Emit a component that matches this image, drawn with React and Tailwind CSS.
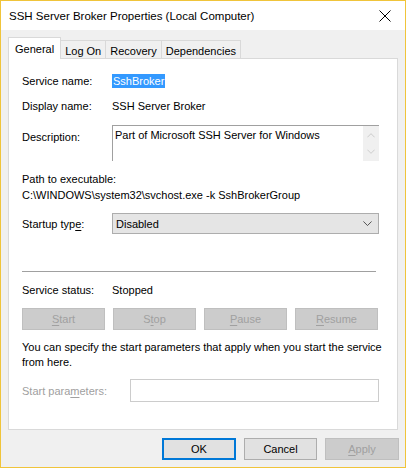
import React from "react";

const font = { fontFamily: '"Liberation Sans", Arial, sans-serif' };

function CloseIcon() {
  return (
    <svg width="12" height="12" viewBox="0 0 12 12" fill="none" stroke="#000" strokeWidth="1">
      <path d="M0.5 0.5 L11.5 11.5 M11.5 0.5 L0.5 11.5" />
    </svg>
  );
}

function Chevron({ up, color = "#000", w = 11, h = 6 }) {
  return (
    <svg width={w} height={h} viewBox="0 0 11 6" fill="none" stroke={color} strokeWidth="1">
      {up ? <path d="M0.5 5.5 L5.5 0.5 L10.5 5.5" /> : <path d="M0.5 0.5 L5.5 5.5 L10.5 0.5" />}
    </svg>
  );
}

function Tab({ label, active }) {
  if (active) {
    return (
      <div className="relative z-10 h-[22px] -mb-px px-[6px] pt-[3px] bg-white border border-b-0 border-[#d9d9d9] text-black">
        {label}
      </div>
    );
  }
  return (
    <div className="mt-[3px] h-[18px] -ml-px px-[4px] pt-[2px] bg-[#f0f0f0] border border-b-0 border-[#d9d9d9] text-black">
      {label}
    </div>
  );
}

function Ul({ children }) {
  return <span className="underline underline-offset-2">{children}</span>;
}

function DisabledBtn({ children }) {
  return (
    <div className="h-[22px] flex items-center justify-center bg-[#cccccc] border border-[#bfbfbf] text-[#a0a0a0]">
      {children}
    </div>
  );
}

export default function App() {
  return (
    <div
      className="w-[406px] h-[468px] border border-[#f0c43a] bg-[#f0f0f0] flex flex-col text-[11px] leading-[16px] text-black"
      style={font}
    >
      {/* title bar */}
      <div className="h-[29px] bg-white flex items-center justify-between pl-[8px] pr-[14px]">
        <div className="text-[11.5px] pt-px">SSH Server Broker Properties (Local Computer)</div>
        <CloseIcon />
      </div>

      {/* tabs */}
      <div className="flex items-start pl-[7px] mt-[7px]">
        <Tab label="General" active />
        <Tab label="Log On" />
        <Tab label="Recovery" />
        <Tab label="Dependencies" />
      </div>

      {/* panel */}
      <div className="ml-[7px] w-[390px] h-[372px] bg-white border border-[#d9d9d9] pl-[13px] pr-[18px]">
        <div className="flex mt-[14px]">
          <div className="w-[90px]">Service name:</div>
          <div className="h-[14px] leading-[14px] mt-px px-px bg-[#3399ff] text-white">SshBroker</div>
        </div>

        <div className="flex mt-[9px]">
          <div className="w-[90px]">Display name:</div>
          <div>SSH Server Broker</div>
        </div>

        <div className="flex mt-[11px]">
          <div className="w-[90px] pt-[4px]">Description:</div>
          <div className="flex-1 h-[36px] flex border-t border-l border-[#a0a0a0]">
            <div className="flex-1 pl-[2px] pt-[1px]">Part of Microsoft SSH Server for Windows</div>
            <div className="w-[16px] bg-[#f0f0f0] flex flex-col items-center justify-around py-[2px]">
              <Chevron up color="#c0c0c0" w={8} h={5} />
              <Chevron color="#c0c0c0" w={8} h={5} />
            </div>
          </div>
        </div>

        <div className="mt-[10px]">Path to executable:</div>
        <div>C:\WINDOWS\system32\svchost.exe -k SshBrokerGroup</div>

        <div className="flex items-center mt-[10px]">
          <div className="w-[90px]">
            Startup typ<Ul>e</Ul>:
          </div>
          <div className="flex-1 h-[21px] flex items-center justify-between bg-[#e5e5e5] border border-[#adadad] pl-[3px] pr-[6px]">
            <span>Disabled</span>
            <Chevron color="#333" w={9} h={5} />
          </div>
        </div>

        <div className="mt-[37px] w-[354px] h-px bg-[#a0a0a0]" />

        <div className="flex mt-[10px]">
          <div className="w-[90px]">Service status:</div>
          <div>Stopped</div>
        </div>

        <div className="grid grid-cols-4 gap-[8px] w-[356px] mt-[10px]">
          <DisabledBtn>
            <Ul>S</Ul>tart
          </DisabledBtn>
          <DisabledBtn>
            S<Ul>t</Ul>op
          </DisabledBtn>
          <DisabledBtn>
            <Ul>P</Ul>ause
          </DisabledBtn>
          <DisabledBtn>
            <Ul>R</Ul>esume
          </DisabledBtn>
        </div>

        <div className="mt-[10px] leading-[15px] whitespace-nowrap">
          You can specify the start parameters that apply when you start the service
          <br />
          from here.
        </div>

        <div className="flex items-center mt-[9px]">
          <div className="w-[108px] text-[#a0a0a0]">
            Start para<Ul>m</Ul>eters:
          </div>
          <div className="flex-1 h-[23px] bg-white border border-[#cccccc]" />
        </div>
      </div>

      {/* bottom buttons */}
      <div className="flex justify-end gap-[8px] mt-[8px] pr-[6px]">
        <div className="w-[74px] h-[22px] flex items-center justify-center bg-[#e1e1e1] border-2 border-[#0078d7]">
          OK
        </div>
        <div className="w-[73px] h-[22px] flex items-center justify-center bg-[#e1e1e1] border border-[#adadad]">
          Cancel
        </div>
        <div className="w-[74px] h-[22px] flex items-center justify-center bg-[#cccccc] border border-[#bfbfbf] text-[#a0a0a0]">
          <Ul>A</Ul>pply
        </div>
      </div>
    </div>
  );
}
